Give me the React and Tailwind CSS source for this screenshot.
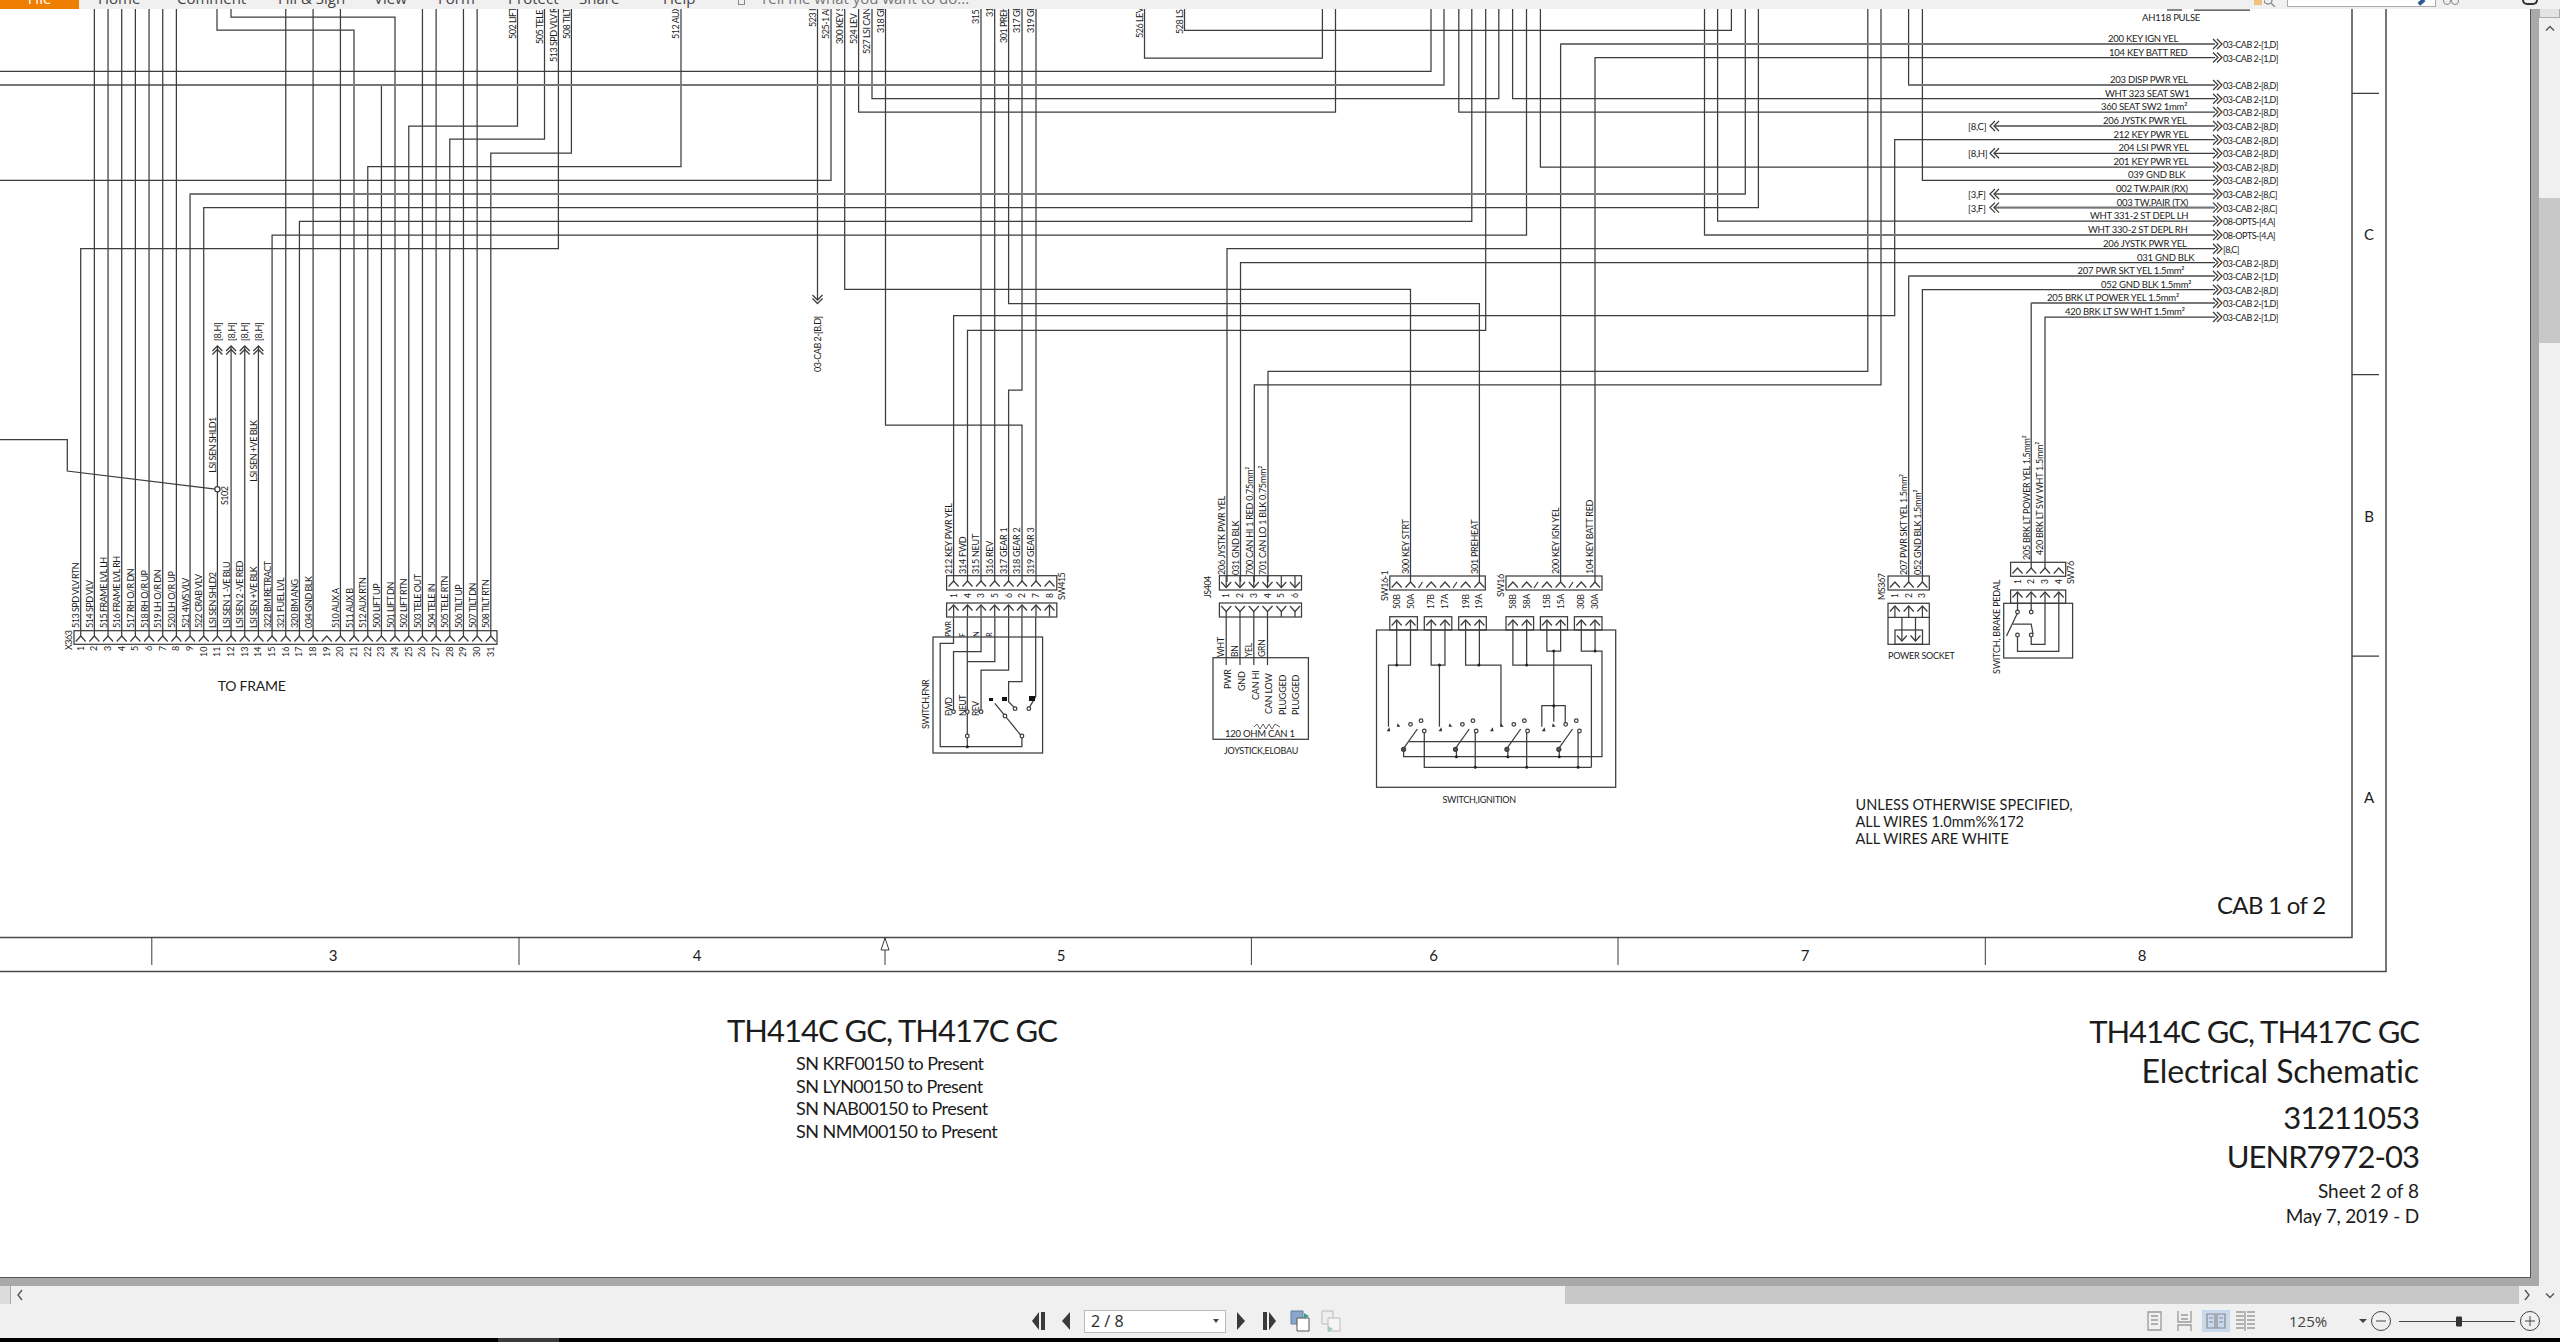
import React from 'react';

const pin = (n) => 80.7 + 13.67 * (n - 1);
const z10 = (pts) => pts.map(([x, y]) => [920 + x / 2.178, 480 + y / 3]);
const z11 = (pts) => pts.map(([x, y]) => [1360 + x / 2.178, 530 + y / 3]);

// long harness runs, in page pixels
const wires = [
  [[217, 0], [217, 30], [354, 30], [354, 636]],
  [[231, 0], [231, 17], [395, 17], [395, 636]],
  [[pin(1), 636], [pin(1), 248.5], [558.4, 248.5], [558.4, 0]],
  [[pin(9), 636], [pin(9), 194], [1745.3, 194], [1745.3, 0]],
  [[pin(10), 636], [pin(10), 207.6], [1758.4, 207.6], [1758.4, 0]],
  [[pin(15), 636], [pin(15), 235], [1526.5, 235], [1526.5, 0]],
  [[pin(17), 636], [pin(17), 221.4], [1471.8, 221.4], [1471.8, 0]],
  [[pin(22), 636], [pin(22), 166.6], [681, 166.6], [681, 0]],
  [[pin(25), 636], [pin(25), 126], [517.5, 126], [517.5, 0]],
  [[pin(28), 636], [pin(28), 139], [544.5, 139], [544.5, 0]],
  [[pin(31), 636], [pin(31), 153], [571.4, 153], [571.4, 0]],
  [[pin(23), 636], [pin(23), 85]],
  [[0, 71.4], [1431, 71.4], [1431, 0]],
  [[0, 85], [1444, 85], [1444, 0]],
  [[0, 180.3], [831, 180.3], [831, 0]],
  [[817.5, 0], [817.5, 300]],
  [[844.7, 0], [844.7, 289.3], [1410.5, 289.3], [1410.5, 582]],
  [[858.6, 0], [858.6, 112], [1335.5, 112], [1335.5, 0]],
  [[872, 0], [872, 98.7], [1498.8, 98.7], [1498.8, 0]],
  [[885.5, 0], [885.5, 425], [1022, 425], [1022, 582]],
  [[981, 0], [981, 582]],
  [[994.7, 0], [994.7, 582]],
  [[1008.6, 0], [1008.6, 303.6], [1479.4, 303.6], [1479.4, 582]],
  [[1022, 0], [1022, 390], [1008.6, 390], [1008.6, 582]],
  [[1036, 0], [1036, 582]],
  [[953.6, 582], [953.6, 315.6], [1894.7, 315.6], [1894.7, 139.7], [2215, 139.7]],
  [[967.5, 582], [967.5, 330.3], [1485.7, 330.3], [1485.7, 0]],
  [[1144.5, 0], [1144.5, 58], [1322.4, 58], [1322.4, 0]],
  [[1184.5, 0], [1184.5, 30.4], [1731.4, 30.4], [1731.4, 0]],
  [[1227, 582], [1227, 248.7], [2215, 248.7]],
  [[1240.5, 582], [1240.5, 262.5], [2215, 262.5]],
  [[1254.3, 582], [1254.3, 384.8], [1881, 384.8], [1881, 0]],
  [[1268, 582], [1268, 371.4], [1867.8, 371.4], [1867.8, 0]],
  [[1458.8, 0], [1458.8, 112], [2215, 112]],
  [[1512.6, 0], [1512.6, 98.7], [2215, 98.7]],
  [[1540.4, 0], [1540.4, 167], [2215, 167]],
  [[1560.6, 582], [1560.6, 44], [2215, 44]],
  [[1595, 582], [1595, 57.5], [2215, 57.5]],
  [[1704.5, 0], [1704.5, 235], [2215, 235]],
  [[1717.6, 0], [1717.6, 221], [2215, 221]],
  [[1908.6, 0], [1908.6, 85], [2215, 85]],
  [[1922.4, 0], [1922.4, 180.3], [2215, 180.3]],
  [[1908.7, 582], [1908.7, 276], [2215, 276]],
  [[1922.4, 582], [1922.4, 289.7], [2215, 289.7]],
  [[2031.2, 568], [2031.2, 303], [2215, 303]],
  [[2045, 568], [2045, 317], [2215, 317]],
  [[1994, 126], [2215, 126]],
  [[1994, 153.3], [2215, 153.3]],
  [[1994, 194], [2215, 194]],
  [[1994, 207.6], [2215, 207.6]],
  // ground run to S102
  [[0, 439.7], [67.3, 439.7], [67.3, 471], [217.4, 489.3]],
];

// runs that read as a heavier grey in the scan
const heavyRuns = [
  [0, 85, 1444], [190, 194, 1745.3], [1560.6, 44, 2215], [1908.6, 85, 2215], [1994, 126, 2215],
  [1994, 194, 2215], [1994, 207.6, 2215], [1704.5, 235, 2215], [1908.7, 276, 2215], [2031.2, 303, 2215],
];

const straightPins = [2, 3, 4, 5, 6, 7, 8, 16, 18, 20, 26, 27, 29, 30];
const arrowPins = [11, 12, 13, 14];

const x363Labels = [
  '513 SPD VLV RTN', '514 SPD VLV', '515 FRAME LVL LH', '516 FRAME LVL RH', '517 RH O/R DN', '518 RH O/R UP',
  '519 LH O/R DN', '520 LH O/R UP', '521 4WS VLV', '522 CRAB VLV', 'LSI SEN SHLD2', 'LSI SEN 1 -VE BLU',
  'LSI SEN 2 -VE RED', 'LSI SEN +VE BLK', '322 BM RETRACT', '321 FUEL LVL', '320 BM ANG', '034 GND BLK', '',
  '510 AUX A', '511 AUX B', '512 AUX RTN', '500 LIFT UP', '501 LIFT DN', '502 LIFT RTN', '503 TELE OUT',
  '504 TELE IN', '505 TELE RTN', '506 TILT UP', '507 TILT DN', '508 TILT RTN',
];

// labels clipped by the ribbon at the top of the view
const topLabels = [
  ['502 LIFT', 517.5, 39], ['505 TELE', 544.5, 44], ['513 SPD VLV R', 558.4, 62], ['508 TILT', 571.4, 39],
  ['512 AUX', 681, 39], ['523 I', 817.5, 27], ['525-1 AI', 831, 39], ['300 KEY S', 844.7, 44], ['524 LEV', 858.6, 44],
  ['527 LSI CAN', 872, 54], ['318 GE', 885.5, 33], ['315', 981, 24], ['31', 994.7, 17], ['301 PREH', 1008.6, 43],
  ['317 GE', 1022, 33], ['319 GE', 1036, 33], ['526 LEV', 1144.5, 38], ['528 LSI', 1184.5, 34],
];

const connectorLabels = [
  ['212 KEY PWR YEL', 953.6, 574], ['314 FWD', 967.5, 574], ['315 NEUT', 981, 574], ['316 REV', 994.7, 574],
  ['317 GEAR 1', 1008.6, 574], ['318 GEAR 2', 1022, 574], ['319 GEAR 3', 1036, 574],
  ['206 JYSTK PWR YEL', 1227, 575], ['031 GND BLK', 1240.5, 575], ['700 CAN HI 1 RED 0.75mm²', 1254.3, 575],
  ['701 CAN LO 1 BLK 0.75mm²', 1268, 575],
  ['300 KEY STRT', 1410.5, 574], ['301 PREHEAT', 1479.4, 574], ['200 KEY IGN YEL', 1560.6, 574], ['104 KEY BATT RED', 1595, 574],
  ['207 PWR SKT YEL 1.5mm²', 1908.7, 575], ['052 GND BLK 1.5mm²', 1922.4, 575],
  ['205 BRK LT POWER YEL 1.5mm²', 2031.2, 560], ['420 BRK LT SW WHT 1.5mm²', 2045, 555],
];

const rows = [
  [44, '200 KEY IGN YEL', 2108, '03-CAB 2-[1,D]'], [57.5, '104 KEY BATT RED', 2109, '03-CAB 2-[1,D]'],
  [85, '203 DISP PWR YEL', 2110, '03-CAB 2-[8,D]'], [98.7, 'WHT 323 SEAT SW1', 2105, '03-CAB 2-[1,D]'],
  [112, '360 SEAT SW2 1mm²', 2101, '03-CAB 2-[8,D]'], [126, '206 JYSTK PWR YEL', 2103, '03-CAB 2-[8,D]'],
  [139.7, '212 KEY PWR YEL', 2113.5, '03-CAB 2-[8,D]'], [153.3, '204 LSI PWR YEL', 2118.4, '03-CAB 2-[8,D]'],
  [167, '201 KEY PWR YEL', 2113.5, '03-CAB 2-[8,D]'], [180.3, '039 GND BLK', 2128, '03-CAB 2-[8,D]'],
  [194, '002 TW.PAIR (RX)', 2116, '03-CAB 2-[8,C]'], [207.6, '003 TW.PAIR (TX)', 2116.7, '03-CAB 2-[8,C]'],
  [221, 'WHT 331-2 ST DEPL LH', 2090, '08-OPTS-[4,A]'], [235, 'WHT 330-2 ST DEPL RH', 2088, '08-OPTS-[4,A]'],
  [248.7, '206 JYSTK PWR YEL', 2103, '[8,C]'], [262.5, '031 GND BLK', 2137, '03-CAB 2-[8,D]'],
  [276, '207 PWR SKT YEL 1.5mm²', 2077.5, '03-CAB 2-[1,D]'], [289.7, '052 GND BLK 1.5mm²', 2101, '03-CAB 2-[8,D]'],
  [303, '205 BRK LT POWER YEL 1.5mm²', 2047, '03-CAB 2-[1,D]'], [317, '420 BRK LT SW WHT 1.5mm²', 2065, '03-CAB 2-[1,D]'],
];

const backRefs = [[126, '[8,C]'], [153.3, '[8,H]'], [194, '[3,F]'], [207.6, '[3,F]']];

const toPts = (pts) => pts.map((p) => p.join(',')).join(' ');
const Wire = ({ pts }) => <polyline points={toPts(pts)} />;

const VText = ({ x, y, size = 9, spacing = -0.5, anchor = 'start', children }) => (
  <text
    x={x}
    y={y}
    fontSize={size}
    letterSpacing={spacing}
    textAnchor={anchor}
    transform={`rotate(-90 ${x} ${y})`}
    fill="#1c1c1c"
    stroke="none"
  >
    {children}
  </text>
);

const HText = ({ x, y, size = 9.5, spacing = -0.25, anchor = 'start', children }) => (
  <text x={x} y={y} fontSize={size} letterSpacing={spacing} textAnchor={anchor} fill="#1c1c1c" stroke="none">
    {children}
  </text>
);

// chevron on a connector pin, apex up or down
const Chev = ({ x, y, dir = 'up', r = 5, h = 5.5 }) => (
  <polyline points={dir === 'up' ? `${x - r},${y + h} ${x},${y} ${x + r},${y + h}` : `${x - r},${y} ${x},${y + h} ${x + r},${y}`} />
);

const Dot = ({ x, y }) => <circle cx={x} cy={y} r="1.5" fill="#222" stroke="none" />;
const Ring = ({ x, y, r = 1.8 }) => <circle cx={x} cy={y} r={r} fill="#fff" />;

const Box = ({ x1, y1, x2, y2 }) => <rect x={x1} y={y1} width={x2 - x1} height={y2 - y1} />;

const MatePins = ({ pins, y, h = 13.5 }) =>
  pins.map((x) => (
    <g key={x}>
      <Chev x={x} y={y + 2} />
      <line x1={x} y1={y + 2} x2={x} y2={y + h} />
    </g>
  ));

function Schematic() {
  return (
    <svg
      viewBox="0 9 2530 980"
      className="block h-[980px] w-[2530px] shrink-0"
      style={{ fontFamily: 'Lato, "Open Sans", sans-serif' }}
    >
      <g fill="none" stroke="#3d3d3d" strokeWidth="1.25">
        {wires.map((pts, i) => (
          <Wire key={i} pts={pts} />
        ))}
        <g stroke="#777" strokeWidth="2">
          {heavyRuns.map(([a, y, b]) => (
            <line key={`${a}-${y}`} x1={a} y1={y} x2={b} y2={y} />
          ))}
        </g>
        {straightPins.map((n) => (
          <line key={n} x1={pin(n)} y1="0" x2={pin(n)} y2="636" />
        ))}
        {arrowPins.map((n) => (
          <g key={n}>
            <line x1={pin(n)} y1="636" x2={pin(n)} y2="346" />
            <Chev x={pin(n)} y={346} r={5} h={5} />
            <Chev x={pin(n)} y={349.5} r={5} h={5} />
          </g>
        ))}

        {/* X363 frame connector */}
        <Box x1={74} y1={630.7} x2={497} y2={644.3} />
        {x363Labels.map((_, i) => (
          <Chev key={i} x={pin(i + 1)} y={636} />
        ))}

        {/* left running arrows */}
        {backRefs.map(([y]) => (
          <g key={y}>
            <polyline points={`${1995},${y - 5} ${1990},${y} ${1995},${y + 5}`} />
            <polyline points={`${1999},${y - 5} ${1994},${y} ${1999},${y + 5}`} />
          </g>
        ))}
        {rows.map(([y]) => (
          <g key={y}>
            <polyline points={`${2213},${y - 5} ${2218},${y} ${2213},${y + 5}`} />
            <polyline points={`${2217},${y - 5} ${2222},${y} ${2217},${y + 5}`} />
          </g>
        ))}
        <polyline points="812.5,295 817.5,300 822.5,295" />
        <polyline points="812.5,298.5 817.5,303.5 822.5,298.5" />
        <Ring x={217.4} y={489.3} r={2.6} />
        <polyline points="2167,10 2182,10" />
        <polyline points="2194,10 2250,10" />

        {/* SW415 / FNR switch */}
        <Box x1={946.6} y1={575.7} x2={1056.8} y2={590} />
        {[953.6, 967.5, 981, 994.7, 1008.6, 1022, 1036, 1049.5].map((x) => (
          <Chev key={x} x={x} y={581} />
        ))}
        <Box x1={946.6} y1={603} x2={1056.8} y2={617} />
        <MatePins pins={[953.6, 967.5, 981, 994.7, 1008.6, 1022, 1036, 1049.5]} y={603} />
        <Box x1={933} y1={637} x2={1042.6} y2={753} />
        {[
          [[73, 412], [73, 490], [44, 490], [44, 800], [222, 800], [222, 770]],
          [[103, 412], [103, 800]],
          [[133, 412], [133, 515], [73, 515], [73, 695]],
          [[163, 412], [163, 545], [103, 545]],
          [[193, 412], [193, 570], [133, 570], [133, 695]],
          [[222, 412], [222, 605], [193, 605], [193, 665], [207, 685]],
          [[252, 412], [252, 650], [237, 685]],
          [[163, 670], [222, 770]],
        ].map((pts, i) => (
          <Wire key={i} pts={z10(pts)} />
        ))}
        {[[73, 695], [103, 695], [133, 695], [185, 708], [207, 686], [237, 686], [103, 768], [222, 768]].map(([x, y], i) => (
          <Ring key={i} x={920 + x / 2.178} y={480 + y / 3} />
        ))}
        <Dot x={967.3} y={746.7} />
        <rect x={989} y={698} width="4" height="3" fill="#111" stroke="none" />
        <rect x={1002} y={697} width="5" height="4" fill="#111" stroke="none" />
        <rect x={1029} y={696} width="6" height="5" fill="#111" stroke="none" />

        {/* JS404 joystick */}
        <Box x1={1219.4} y1={575.7} x2={1301.5} y2={590} />
        {[1226.2, 1240, 1253.8, 1267.5, 1281.3, 1295].map((x) => (
          <g key={x}>
            <Chev x={x} y={582} dir="down" />
            <line x1={x} y1={576} x2={x} y2={587.5} />
          </g>
        ))}
        <Box x1={1219.4} y1={603} x2={1301.5} y2={617} />
        {[1226.2, 1240, 1253.8, 1267.5, 1281.3, 1295].map((x) => (
          <g key={x}>
            <Chev x={x} y={606} dir="down" />
            <line x1={x} y1={611.5} x2={x} y2={617} />
          </g>
        ))}
        {[1226.2, 1240, 1253.8, 1267.5].map((x) => (
          <line key={x} x1={x} y1={617} x2={x} y2={665} />
        ))}
        <Box x1={1213} y1={657.7} x2={1308.4} y2={739.3} />
        <polyline points="1254,727 1257,724 1260,729 1263,724 1266,729 1269,724 1272,729 1275,724 1280,727" strokeWidth="0.8" />

        {/* SW16-1 and SW16 ignition switch */}
        <Box x1={1389.8} y1={576} x2={1485.3} y2={590} />
        <Box x1={1506} y1={576} x2={1602} y2={590} />
        {[1396.7, 1410.5, 1431.2, 1445, 1465.6, 1479.4, 1512.9, 1526.7, 1546.9, 1560.6, 1581.3, 1595].map((x) => (
          <Chev key={x} x={x} y={582} />
        ))}
        {[1420.5, 1455, 1536, 1571].map((x) => (
          <line key={x} x1={x - 2} y1={588} x2={x + 2} y2={582} />
        ))}
        {[
          [1389.8, 1417.4],
          [1424.3, 1451.8],
          [1458.7, 1486.3],
          [1506, 1533.6],
          [1540.4, 1567.5],
          [1574.4, 1602],
        ].map(([a, b]) => (
          <Box key={a} x1={a} y1={616.7} x2={b} y2={630} />
        ))}
        <MatePins pins={[1396.7, 1410.5, 1431.2, 1445, 1465.6, 1479.4, 1512.9, 1526.7, 1546.9, 1560.6, 1581.3, 1595]} y={618} h={12} />
        <Box x1={1376.5} y1={630} x2={1615.7} y2={787.3} />
        {[
          [[80, 300], [80, 405]],
          [[110, 300], [110, 405], [62, 405], [62, 590]],
          [[155, 300], [155, 405], [185, 405], [185, 300]],
          [[173, 405], [173, 590]],
          [[230, 300], [230, 405], [307, 405], [307, 590]],
          [[260, 300], [260, 405]],
          [[333, 300], [333, 405], [504, 405], [504, 712]],
          [[363, 300], [363, 405]],
          [[407, 300], [407, 363], [437, 363], [437, 300]],
          [[422, 363], [422, 575]],
          [[396, 590], [396, 527], [447, 527], [447, 583]],
          [[482, 300], [482, 363], [527, 363], [527, 680], [95, 680], [95, 658]],
          [[512, 300], [512, 363]],
          [[140, 605], [140, 712], [504, 712]],
          [[107, 635], [438, 635]],
          [[210, 658], [210, 680]],
          [[322, 658], [322, 680]],
          [[434, 658], [434, 680]],
          [[251, 605], [251, 712]],
          [[363, 605], [363, 712]],
          [[475, 605], [475, 712]],
        ].map((pts, i) => (
          <Wire key={i} pts={z11(pts)} />
        ))}
        {[0, 113, 225, 338].map((d) => (
          <g key={d}>
            <Wire pts={z11([[95 + d, 655], [125 + d, 597]])} />
            <circle cx={1360 + (95 + d) / 2.178} cy={530 + 658 / 3} r="2" fill="#555" />
            <Ring x={1360 + (140 + d) / 2.178} y={530 + 603 / 3} />
            <Ring x={1360 + (110 + d) / 2.178} y={530 + 583 / 3} />
            <Ring x={1360 + (133 + d) / 2.178} y={530 + 572 / 3} />
            <polygon points={toPts(z11([[58 + d, 604], [66 + d, 604], [64 + d, 592]]))} fill="#333" stroke="none" />
            <polygon points={toPts(z11([[80 + d, 590], [88 + d, 590], [82 + d, 580]]))} fill="#333" stroke="none" />
          </g>
        ))}
        {[[80, 405], [173, 405], [259, 405], [363, 405], [422, 363], [512, 363], [422, 527], [210, 680], [322, 680], [434, 680], [251, 712], [363, 712], [475, 712]].map(([x, y], i) => (
          <Dot key={i} x={1360 + x / 2.178} y={530 + y / 3} />
        ))}

        {/* MS367 power socket */}
        <Box x1={1888} y1={576} x2={1929.3} y2={590} />
        {[1894.9, 1908.7, 1922.4].map((x) => (
          <Chev key={x} x={x} y={582} />
        ))}
        <Box x1={1888} y1={603.3} x2={1929.3} y2={644.3} />
        <line x1={1888} y1={617.3} x2={1929.3} y2={617.3} />
        <MatePins pins={[1894.9, 1908.7, 1922.4]} y={604} />
        <Box x1={1895} y1={630} x2={1922.5} y2={644.3} />
        {[1901.9, 1915.5].map((x) => (
          <g key={x}>
            <line x1={x} y1={617.3} x2={x} y2={641} />
            <Chev x={x} y={635.5} dir="down" />
          </g>
        ))}

        {/* SW76 brake pedal switch */}
        <Box x1={2010.6} y1={562.3} x2={2065.7} y2={576.3} />
        {[2017.5, 2031.2, 2045, 2058.8].map((x) => (
          <Chev key={x} x={x} y={568} />
        ))}
        <Box x1={2010.6} y1={590} x2={2065.7} y2={603.3} />
        <MatePins pins={[2017.5, 2031.2, 2045, 2058.8]} y={590} h={13} />
        <Box x1={2003.7} y1={603.3} x2={2072.6} y2={658} />
        <polyline points="2017.5,603 2017.5,612" />
        <polyline points="2031.2,603 2031.2,612" />
        <polyline points="2045,603 2045,644.3 2031.2,644.3 2031.2,636" />
        <polyline points="2058.8,603 2058.8,651.3 2017.5,651.3 2017.5,636" />
        <polyline points="2006.5,636 2017.5,613" />
        <polyline points="2013,624 2031.2,624 2033,634" />
        <Ring x={2017.5} y={612} />
        <Ring x={2031.2} y={612} />
        <Ring x={2017.5} y={635} />
        <Ring x={2031.2} y={635} />

        {/* sheet frame */}
        <path d="M0 937.5H2352V0M0 971.5H2386V0" stroke="#4a4a4a" strokeWidth="1.5" />
        <path d="M151.8 937.5V965M519 937.5V965M885 937.5V965M1251.4 937.5V965M1618 937.5V965M1985.3 937.5V965" strokeWidth="1" />
        <path d="M2352 93.3H2379M2352 374.6H2379M2352 656H2379" strokeWidth="1.25" />
        <polygon points="885,938 881,950 889,950" fill="#fff" strokeWidth="1" />
      </g>

      {x363Labels.map((t, i) => (t ? <VText key={i} x={pin(i + 1) - 1.4} y={628}>{t}</VText> : null))}
      {x363Labels.map((_, i) => (
        <VText key={i} x={pin(i + 1) + 3} y={i + 1 < 10 ? 651 : 657} spacing={0}>{i + 1}</VText>
      ))}
      <VText x={72} y={650}>X363</VText>
      {arrowPins.map((n) => (
        <VText key={n} x={pin(n) + 3.5} y={341} size={9} spacing={-0.2}>[8,H]</VText>
      ))}
      <VText x={215.6} y={472.7}>LSI SEN SHLD1</VText>
      <VText x={256.7} y={481.7}>LSI SEN +VE BLK</VText>
      <VText x={227.7} y={505}>S102</VText>
      <HText x={217.7} y={691} size={14}>TO FRAME</HText>
      <VText x={821} y={372}>03-CAB 2-[B,D]</VText>

      {topLabels.map(([t, x, y]) => (
        <VText key={t} x={x - 1.6} y={y}>{t}</VText>
      ))}
      {connectorLabels.map(([t, x, y]) => (
        <VText key={t} x={x - 1.6} y={y} spacing={-0.25}>{t}</VText>
      ))}

      {rows.map(([y, label, x, target]) => (
        <g key={y}>
          <HText x={x} y={y - 2}>{label}</HText>
          <HText x={2223} y={y + 4} size={9} spacing={-0.5}>{target}</HText>
        </g>
      ))}
      {backRefs.map(([y, t]) => (
        <HText key={y} x={1968} y={y + 4}>{t}</HText>
      ))}
      <HText x={2142} y={21}>AH118 PULSE</HText>

      {/* SW415 text */}
      {[['1', 953.6], ['4', 967.5], ['3', 981], ['5', 994.7], ['6', 1008.6], ['2', 1022], ['7', 1036], ['8', 1049.5]].map(([t, x]) => (
        <VText key={x} x={x + 3} y={598} size={8.5} spacing={0}>{t}</VText>
      ))}
      <VText x={1065} y={600}>SW415</VText>
      {[['PWR', 951], ['F', 965], ['N', 979], ['R', 992]].map(([t, x]) => (
        <VText key={t} x={x} y={637} size={7.5}>{t}</VText>
      ))}
      <VText x={929} y={729}>SWITCH,FNR</VText>
      <VText x={951.5} y={716} size={8.5}>FWD</VText>
      <VText x={965.5} y={716} size={8.5}>NEUT</VText>
      <VText x={979} y={716} size={8.5}>REV</VText>

      {/* JS404 text */}
      {[1, 2, 3, 4, 5, 6].map((n, i) => (
        <VText key={n} x={[1226.2, 1240, 1253.8, 1267.5, 1281.3, 1295][i] + 3} y={598} size={8.5} spacing={0}>{n}</VText>
      ))}
      <VText x={1211} y={598}>JS404</VText>
      {[['WHT', 1224], ['BN', 1237.5], ['YEL', 1251.5], ['GRN', 1265]].map(([t, x]) => (
        <VText key={t} x={x} y={657} size={8.5} spacing={-0.2}>{t}</VText>
      ))}
      {[['PWR', 1231, 689], ['GND', 1244.5, 691], ['CAN HI', 1258.5, 700], ['CAN LOW', 1272, 714], ['PLUGGED', 1285.5, 715], ['PLUGGED', 1299, 715]].map(([t, x, y], i) => (
        <VText key={i} x={x} y={y} spacing={-0.2}>{t}</VText>
      ))}
      <HText x={1225} y={736.5}>120 OHM CAN 1</HText>
      <HText x={1224} y={753.5} size={9}>JOYSTICK,ELOBAU</HText>

      {/* SW16 text */}
      <VText x={1388} y={601}>SW16-1</VText>
      <VText x={1504} y={597}>SW16</VText>
      {[['50B', 1396.7], ['50A', 1410.5], ['17B', 1431.2], ['17A', 1445], ['19B', 1465.6], ['19A', 1479.4], ['58B', 1512.9], ['58A', 1526.7], ['15B', 1546.9], ['15A', 1560.6], ['30B', 1581.3], ['30A', 1595]].map(([t, x]) => (
        <VText key={t} x={x + 3} y={609} size={8.5} spacing={-0.2}>{t}</VText>
      ))}
      <HText x={1442.5} y={803} size={9}>SWITCH,IGNITION</HText>

      {/* MS367 and SW76 text */}
      <VText x={1885} y={600}>MS367</VText>
      {[['1', 1894.9], ['2', 1908.7], ['3', 1922.4]].map(([t, x]) => (
        <VText key={x} x={x + 3} y={598} size={8.5} spacing={0}>{t}</VText>
      ))}
      <HText x={1888} y={658.5} size={9}>POWER SOCKET</HText>
      <VText x={2074} y={584}>SW76</VText>
      {[['1', 2017.5], ['2', 2031.2], ['3', 2045], ['4', 2058.8]].map(([t, x]) => (
        <VText key={x} x={x + 3} y={584} size={8.5} spacing={0}>{t}</VText>
      ))}
      <VText x={2000} y={674} spacing={-0.2}>SWITCH, BRAKE PEDAL</VText>

      {/* notes and frame references */}
      <HText x={1855.5} y={810} size={14.5} spacing={0}>UNLESS OTHERWISE SPECIFIED,</HText>
      <HText x={1855.5} y={827} size={14.5} spacing={0}>ALL WIRES 1.0mm%%172</HText>
      <HText x={1855.5} y={843.5} size={14.5} spacing={0}>ALL WIRES ARE WHITE</HText>
      <HText x={2217} y={914} size={24} spacing={-0.7}>CAB 1 of 2</HText>
      {[['3', 333], ['4', 697], ['5', 1061], ['6', 1433.5], ['7', 1805], ['8', 2142]].map(([t, x]) => (
        <HText key={t} x={x} y={961} size={15} spacing={0} anchor="middle">{t}</HText>
      ))}
      {[['C', 240], ['B', 522], ['A', 803]].map(([t, y]) => (
        <HText key={t} x={2369} y={y} size={15} spacing={0} anchor="middle">{t}</HText>
      ))}
    </svg>
  );
}

const tabs = [
  { label: 'Home', cls: 'w-[98px] pl-[19px]' },
  { label: 'Comment', cls: 'w-[101px]' },
  { label: 'Fill & Sign', cls: 'w-[96px]' },
  { label: 'View', cls: 'w-[64px]' },
  { label: 'Form', cls: 'w-[70px]' },
  { label: 'Protect', cls: 'w-[71px]' },
  { label: 'Share', cls: 'w-[84px]' },
  { label: 'Help', cls: 'w-[75px]' },
];

function Ribbon() {
  return (
    <div className="flex h-[9px] shrink-0 items-start overflow-hidden bg-[#f0f0f0] font-['Open_Sans',sans-serif] text-[15px] leading-[24px] text-[#444]">
      <div className="flex h-[9px] w-[79px] justify-center bg-[#ee7f01] text-white">
        <span className="-mt-[14px]">File</span>
      </div>
      {tabs.map((t) => (
        <span key={t.label} className={`-mt-[14px] shrink-0 whitespace-nowrap ${t.cls}`}>
          {t.label}
        </span>
      ))}
      <span className="-mt-[1px] h-[6px] w-[7px] shrink-0 border border-[#888]" />
      <span className="-mt-[14px] ml-[15px] whitespace-nowrap text-[#777]">Tell me what you want to do...</span>
      <div className="ml-auto flex items-start">
        <span className="h-[5px] w-[8px] bg-[#f3c27a]" />
        <svg width="12" height="7" viewBox="0 0 12 7" className="ml-[2px]" fill="none" stroke="#888" strokeWidth="1.3">
          <circle cx="4" cy="0" r="4" />
          <path d="M7 3l4 4" />
        </svg>
        <div className="ml-[11px] flex h-[7px] w-[149px] justify-end border-x border-b border-[#aaa] bg-white pr-[10px]">
          <span className="h-[4px] w-[7px] rotate-[-40deg] bg-[#2a5a95]" />
        </div>
        <svg width="20" height="6" viewBox="0 0 20 6" className="ml-[6px]" fill="none" stroke="#888">
          <circle cx="5" cy="1" r="3.5" />
          <circle cx="13" cy="1" r="3.5" />
        </svg>
        <span className="ml-[60px] mr-[22px] h-[5px] w-[16px] rounded-b-full border-x-2 border-b-2 border-[#333]" />
      </div>
    </div>
  );
}

function VScroll() {
  return (
    <div className="flex w-[21px] shrink-0 flex-col items-center bg-[#f0f0f0]">
      <div className="h-[9px] w-full border border-t-0 border-[#ababab] bg-[#e3e3e3]" />
      <svg width="10" height="6" viewBox="0 0 10 6" className="mt-[7px]" fill="none" stroke="#555" strokeWidth="1.4">
        <path d="M1 5.5L5 1.5l4 4" />
      </svg>
      <div className="mt-[167px] h-[145px] w-full bg-[#c8c8c8]" />
      <svg width="10" height="6" viewBox="0 0 10 6" className="mt-auto mb-[5px]" fill="none" stroke="#555" strokeWidth="1.4">
        <path d="M1 .5L5 4.5l4-4" />
      </svg>
    </div>
  );
}

function NavIcon({ kind }) {
  const d = {
    first: 'M0 10L7 1v18zM9 1h4v18H9z',
    prev: 'M0 10L8 1v18z',
    next: 'M8 10L0 1v18z',
    last: 'M13 10L6 1v18zM0 1h4v18H0z',
  }[kind];
  return (
    <svg width="14" height="20" viewBox="0 0 14 20" fill="#3a3a3a">
      <path d={d} />
    </svg>
  );
}

function StatusBar() {
  return (
    <div className="flex h-[34px] shrink-0 items-center bg-[#f0f0f0] font-['Noto_Sans',sans-serif] text-[16px] text-[#333]">
      <div className="ml-[1032px]"><NavIcon kind="first" /></div>
      <div className="ml-[16px]"><NavIcon kind="prev" /></div>
      <div className="ml-[8px] flex h-[23px] w-[142px] items-center justify-between border border-[#bbb] bg-white px-[6px]">
        <span>2 / 8</span>
        <span className="h-0 w-0 border-x-[3px] border-t-[4px] border-x-transparent border-t-[#444]" />
      </div>
      <div className="ml-[11px]"><NavIcon kind="next" /></div>
      <div className="ml-[12px]"><NavIcon kind="last" /></div>
      <svg width="52" height="24" viewBox="0 0 52 24" className="ml-[13px]" fill="none">
        <path d="M1 2h12v13H1z" fill="#8aa6c9" stroke="#5a7fa9" />
        <path d="M7 9h12v13H7z" fill="#fff" stroke="#555" />
        <path d="M14 4l5 3-5 3z" fill="#3e9e8c" />
        <path d="M32 2h11v13H32z" fill="#eee" stroke="#bbb" />
        <path d="M38 9h12v13H38z" fill="#f5f5f5" stroke="#bbb" />
        <path d="M38 17l5 3-5 3z" fill="#9cc9bf" />
      </svg>
      <div className="ml-[805px] flex items-center">
        <svg width="15" height="20" viewBox="0 0 15 20" fill="none" stroke="#9a9a9a" strokeWidth="1.3">
          <path d="M1 1h13v18H1zM4 5h7M4 9h7M4 13h7" />
        </svg>
        <svg width="15" height="20" viewBox="0 0 15 20" className="ml-[15px]" fill="none" stroke="#9a9a9a" strokeWidth="1.3">
          <path d="M1 0v11h13V0M1 20v-6h13v6M4 4h7M4 8h7" />
        </svg>
        <div className="ml-[10px] flex h-[22px] w-[28px] items-center justify-center bg-[#c8d9ee]">
          <svg width="20" height="16" viewBox="0 0 20 16" fill="none" stroke="#8a8a8a" strokeWidth="1.2">
            <path d="M1 1h8v14H1zM11 1h8v14h-8zM3 5h4M3 9h4M13 5h4M13 9h4" />
          </svg>
        </div>
        <svg width="21" height="20" viewBox="0 0 21 20" className="ml-[5px]" fill="none" stroke="#9a9a9a" strokeWidth="1.3">
          <path d="M1 1h8M1 5h8M1 9h8M12 1h8M12 5h8M12 9h8M10 0v20M1 13h8M1 17h8M12 13h8M12 17h8" />
        </svg>
      </div>
      <span className="ml-[33px] w-[70px] font-['Open_Sans',sans-serif] text-[15px] text-[#444]">125%</span>
      <span className="h-0 w-0 border-x-[4px] border-t-[4px] border-x-transparent border-t-[#444]" />
      <svg width="174" height="22" viewBox="0 0 174 22" className="ml-[3px]" fill="none" stroke="#444" strokeWidth="1">
        <circle cx="11" cy="11" r="9.5" />
        <path d="M6 11h10" />
        <path d="M29 11.5h116" strokeWidth="1.2" />
        <rect x="86" y="6.5" width="6" height="10" fill="#333" stroke="none" rx="1" />
        <circle cx="160" cy="11" r="9.5" />
        <path d="M155 11h10M160 6v10" />
      </svg>
    </div>
  );
}

export default function App() {
  return (
    <div className="flex h-[1342px] w-[2560px] flex-col overflow-hidden bg-[#f0f0f0]">
      <Ribbon />
      <div className="flex min-h-0 flex-1">
        <div className="flex min-w-0 flex-1 flex-col">
          <div className="flex min-h-0 flex-1 bg-[#a9a9a9]">
            <div className="mb-[8px] w-[2531px] shrink-0 border-r border-b border-[#555] bg-white">
              <Schematic />
              <div className="flex justify-between pl-[727px] pr-[111px] pt-[21px] font-['Lato','Open_Sans',sans-serif] text-[#1c1c1c]">
                <div>
                  <h1 className="text-[31px] leading-[40px] font-normal tracking-[-1px]">TH414C GC, TH417C GC</h1>
                  <div className="mt-[2px] ml-[69px] text-[18px] leading-[22.7px] tracking-[-0.55px]">
                    <p>SN KRF00150 to Present</p>
                    <p>SN LYN00150 to Present</p>
                    <p>SN NAB00150 to Present</p>
                    <p>SN NMM00150 to Present</p>
                  </div>
                </div>
                <div className="mt-[1px] text-right">
                  <p className="text-[31px] leading-[40px] tracking-[-1px]">TH414C GC, TH417C GC</p>
                  <p className="text-[32px] leading-[40px] tracking-[-0.1px]">Electrical Schematic</p>
                  <p className="mt-[7px] text-[31px] leading-[39px] tracking-[-1px]">31211053</p>
                  <p className="text-[31px] leading-[39px] tracking-[-1px]">UENR7972-03</p>
                  <p className="mt-[2px] text-[19px] leading-[25px]">Sheet 2 of 8</p>
                  <p className="text-[19px] leading-[25px] tracking-[-0.2px]">May 7, 2019 - D</p>
                </div>
              </div>
            </div>
          </div>
          <div className="flex h-[18px] shrink-0 items-center bg-[#f0f0f0]">
            <span className="h-full w-[11px] border-r border-[#aaa] bg-[#dcdcdc]" />
            <svg width="8" height="12" viewBox="0 0 8 12" className="ml-[5px]" fill="none" stroke="#555" strokeWidth="1.4">
              <path d="M6 1L2 6l4 5" />
            </svg>
            <div className="ml-[1541px] h-full w-[954px] bg-[#c8c8c8]" />
            <svg width="8" height="12" viewBox="0 0 8 12" className="ml-[4px]" fill="none" stroke="#555" strokeWidth="1.4">
              <path d="M2 1l4 5-4 5" />
            </svg>
          </div>
        </div>
        <VScroll />
      </div>
      <StatusBar />
      <div className="flex h-[4px] shrink-0 bg-black">
        <span className="ml-[498px] w-[61px] bg-[#3a3a3a]" />
      </div>
    </div>
  );
}
